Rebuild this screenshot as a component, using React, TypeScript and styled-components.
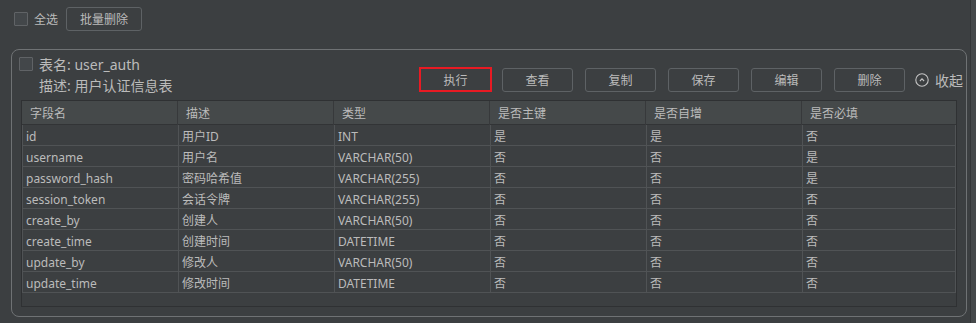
import styled, { createGlobalStyle } from 'styled-components';

interface Field {
  name: string;
  desc: string;
  type: string;
  pk: boolean;
  auto: boolean;
  required: boolean;
}

const fields: Field[] = [
  { name: 'id', desc: '用户ID', type: 'INT', pk: true, auto: true, required: false },
  { name: 'username', desc: '用户名', type: 'VARCHAR(50)', pk: false, auto: false, required: true },
  { name: 'password_hash', desc: '密码哈希值', type: 'VARCHAR(255)', pk: false, auto: false, required: true },
  { name: 'session_token', desc: '会话令牌', type: 'VARCHAR(255)', pk: false, auto: false, required: false },
  { name: 'create_by', desc: '创建人', type: 'VARCHAR(50)', pk: false, auto: false, required: false },
  { name: 'create_time', desc: '创建时间', type: 'DATETIME', pk: false, auto: false, required: false },
  { name: 'update_by', desc: '修改人', type: 'VARCHAR(50)', pk: false, auto: false, required: false },
  { name: 'update_time', desc: '修改时间', type: 'DATETIME', pk: false, auto: false, required: false },
];

const columns = ['字段名', '描述', '类型', '是否主键', '是否自增', '是否必填'];
const actions = ['执行', '查看', '复制', '保存', '编辑', '删除'];

const yesNo = (v: boolean) => (v ? '是' : '否');

const App = () => {
  return (
    <>
      <GlobalStyle />
      <Page>
        <Main>
          <TopBar>
            <CheckLabel>
              <Box />
              全选
            </CheckLabel>
            <ToolButton>批量删除</ToolButton>
          </TopBar>

          <Card>
            <CardHeader>
              <TableInfo>
                <InfoLine>
                  <Box />
                  表名: user_auth
                </InfoLine>
                <InfoLine indent>描述: 用户认证信息表</InfoLine>
              </TableInfo>
              <Actions>
                {actions.map((a, i) => (
                  <ActionButton key={a} highlight={i === 0}>
                    {a}
                  </ActionButton>
                ))}
                <Collapse>
                  <svg width="14" height="14" viewBox="0 0 14 14">
                    <circle cx="7" cy="7" r="6.2" fill="none" stroke="#c4c4c4" strokeWidth="1.1" />
                    <path d="M4.9 8 L7 5.9 L9.1 8" fill="none" stroke="#c4c4c4" strokeWidth="1.1" />
                  </svg>
                  收起
                </Collapse>
              </Actions>
            </CardHeader>

            <TableWrap>
              <HeaderRow>
                {columns.map((c) => (
                  <HeadCell key={c}>{c}</HeadCell>
                ))}
              </HeaderRow>
              {fields.map((f) => (
                <BodyRow key={f.name}>
                  <Cell>{f.name}</Cell>
                  <Cell>{f.desc}</Cell>
                  <Cell>{f.type}</Cell>
                  <Cell>{yesNo(f.pk)}</Cell>
                  <Cell>{yesNo(f.auto)}</Cell>
                  <Cell>{yesNo(f.required)}</Cell>
                </BodyRow>
              ))}
            </TableWrap>
          </Card>
        </Main>
        <ScrollTrack />
      </Page>
    </>
  );
};

export default App;

const GlobalStyle = createGlobalStyle`
  html, body {
    margin: 0;
    padding: 0;
    background: #3c3f41;
  }
  body {
    font-family: "Noto Sans", "Noto Sans CJK SC", sans-serif;
    color: #bbbbbb;
  }
`;

const Page = styled.div`
  display: flex;
  width: 976px;
  height: 323px;
  overflow: hidden;
`;

const Main = styled.div`
  flex: 1;
  display: flex;
  flex-direction: column;
`;

const ScrollTrack = styled.div`
  width: 5px;
  margin-left: 2px;
  background: #45484a;
  border-left: 1px solid #333537;
`;

const TopBar = styled.div`
  display: flex;
  align-items: center;
  height: 24px;
  padding: 7px 0 0 14px;
  margin-bottom: 18px;
`;

const CheckLabel = styled.label`
  display: flex;
  align-items: center;
  gap: 6px;
  font-size: 12px;
  margin-right: 8px;
`;

const Box = styled.span`
  display: inline-block;
  width: 12px;
  height: 12px;
  border: 1px solid #606366;
  background: #43474a;
  border-radius: 1px;
`;

const ToolButton = styled.button`
  height: 24px;
  width: 76px;
  padding: 0;
  font-family: inherit;
  font-size: 12px;
  color: #bbbbbb;
  background: #3c3f41;
  border: 1px solid #5e6265;
  border-radius: 3px;
`;

const Card = styled.div`
  margin-left: 11px;
  width: 954px;
  height: 266px;
  border: 1px solid #6f7274;
  border-radius: 8px;
  display: flex;
  flex-direction: column;
`;

const CardHeader = styled.div`
  display: flex;
  justify-content: space-between;
  align-items: flex-end;
  height: 50px;
  padding: 0 3px 0 7px;
`;

const TableInfo = styled.div`
  display: flex;
  flex-direction: column;
  padding-top: 3px;
  align-self: flex-start;
`;

const InfoLine = styled.div<{ indent?: boolean }>`
  display: flex;
  align-items: center;
  gap: 6px;
  height: 21px;
  font-size: 14px;
  padding-left: ${(p) => (p.indent ? '20px' : '0')};
`;

const Actions = styled.div`
  display: flex;
  align-items: center;
  gap: 12px;
  margin-bottom: 8px;
`;

const ActionButton = styled.button<{ highlight: boolean }>`
  box-sizing: border-box;
  width: ${(p) => (p.highlight ? '73px' : '71px')};
  height: ${(p) => (p.highlight ? '25px' : '24px')};
  margin-right: ${(p) => (p.highlight ? '-2px' : '0')};
  padding: 0;
  font-family: inherit;
  font-size: 12px;
  color: #bbbbbb;
  background: #3c3f41;
  border: ${(p) => (p.highlight ? '2px solid #e81a23' : '1px solid #5e6265')};
  border-radius: ${(p) => (p.highlight ? '0' : '3px')};
`;

const Collapse = styled.span`
  display: flex;
  align-items: center;
  gap: 6px;
  font-size: 14px;
  margin-left: -2px;
`;

const TableWrap = styled.div`
  margin: 0 9px;
  height: 205px;
  border: 1px solid #2f3133;
  background: #3c3f41;
`;

const HeaderRow = styled.div`
  display: grid;
  grid-template-columns: repeat(5, 156px) 1fr;
  height: 24px;
  background: #45494a;
  border-bottom: 1px solid #323436;
  box-sizing: border-box;
`;

const HeadCell = styled.div`
  line-height: 22px;
  padding: 2px 0 0 8px;
  font-size: 12px;
  border-right: 1px solid #37393b;
  &:last-child {
    border-right: none;
  }
`;

const BodyRow = styled.div`
  display: grid;
  grid-template-columns: repeat(5, 156px) 1fr;
  height: 21px;
  box-sizing: border-box;
  border-bottom: 1px solid #505355;
  border-left: 1px solid #505355;
`;

const Cell = styled.div`
  line-height: 17px;
  padding: 3px 0 0 3px;
  font-size: 12px;
  border-right: 1px solid #505355;
  white-space: nowrap;
  overflow: hidden;
`;
